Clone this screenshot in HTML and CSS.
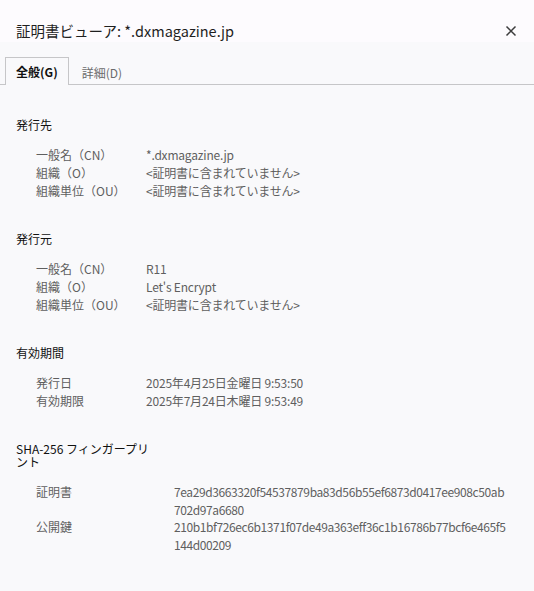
FILE: index.html
```html
<!DOCTYPE html>
<html lang="ja">
<head>
<meta charset="utf-8">
<title>証明書ビューア</title>
<link rel="stylesheet" href="styles.css">
</head>
<body>
<div class="dialog">
  <header class="titlebar">
    <h1 class="title">証明書ビューア: *.dxmagazine.jp</h1>
    <button class="close" aria-label="閉じる">
      <svg width="12" height="12" viewBox="0 0 12 12"><path d="M1.5 1.5 L10.5 10.5 M10.5 1.5 L1.5 10.5" stroke="#3c3c3c" stroke-width="1.5" fill="none"/></svg>
    </button>
  </header>
  <nav class="tabs">
    <div class="tab active">全般(G)</div>
    <div class="tab">詳細(D)</div>
  </nav>
  <main class="content">
    <section class="section">
      <h2 class="heading">発行先</h2>
      <div class="fields">
        <div class="label">一般名（CN）</div><div class="value">*.dxmagazine.jp</div>
        <div class="label">組織（O）</div><div class="value">&lt;証明書に含まれていません&gt;</div>
        <div class="label">組織単位（OU）</div><div class="value">&lt;証明書に含まれていません&gt;</div>
      </div>
    </section>
    <section class="section">
      <h2 class="heading">発行元</h2>
      <div class="fields">
        <div class="label">一般名（CN）</div><div class="value">R11</div>
        <div class="label">組織（O）</div><div class="value">Let's Encrypt</div>
        <div class="label">組織単位（OU）</div><div class="value">&lt;証明書に含まれていません&gt;</div>
      </div>
    </section>
    <section class="section">
      <h2 class="heading">有効期間</h2>
      <div class="fields">
        <div class="label">発行日</div><div class="value">2025年4月25日金曜日 9:53:50</div>
        <div class="label">有効期限</div><div class="value">2025年7月24日木曜日 9:53:49</div>
      </div>
    </section>
    <section class="section">
      <h2 class="heading wrap">SHA-256 フィンガープリ<br>ント</h2>
      <div class="fields fp">
        <div class="label">証明書</div><div class="value hash">7ea29d3663320f54537879ba83d56b55ef6873d0417ee908c50ab<br>702d97a6680</div>
        <div class="label">公開鍵</div><div class="value hash">210b1bf726ec6b1371f07de49a363eff36c1b16786b77bcf6e465f5<br>144d00209</div>
      </div>
    </section>
  </main>
</div>
</body>
</html>
```
FILE: styles.css
```css
* { box-sizing: border-box; }
html, body {
  margin: 0;
  padding: 0;
}
body {
  width: 534px;
  height: 591px;
  background: #f9f9fb;
  font-family: "Noto Sans CJK JP", "Noto Sans", sans-serif;
  color: #202124;
  overflow: hidden;
}
.dialog {
  display: flex;
  flex-direction: column;
  height: 591px;
}
.titlebar {
  height: 42px;
  background: #fdfbfe;
  display: flex;
  align-items: center;
  justify-content: space-between;
  padding: 20px 11px 0 16px;
}
.title {
  margin: 0;
  font-size: 14.5px;
  font-weight: 400;
  line-height: 20px;
  color: #1f1f1f;
}
.close {
  border: 0;
  background: transparent;
  width: 24px;
  height: 24px;
  padding: 0;
  display: flex;
  align-items: center;
  justify-content: center;
}
.tabs {
  display: flex;
  align-items: flex-end;
  height: 43px;
  padding: 0 0 0 5px;
  border-bottom: 1px solid #c6c6c8;
  background: #f9f9fb;
}
.tab {
  height: 27px;
  padding: 0 11px 0 12px;
  font-size: 12px;
  line-height: 28px;
  color: #6b6b6b;
  border: 1px solid transparent;
  border-bottom: 0;
  margin-bottom: -1px;
  white-space: nowrap;
}
.tab.active {
  color: #111;
  font-weight: 700;
  border-color: #c6c6c8;
  background: #f9f9fb;
  height: 28px;
  padding: 0 10px;
}
.content {
  padding: 31px 16px 0 16px;
  display: flex;
  flex-direction: column;
  gap: 30px;
}
.heading {
  margin: 0 0 12px 0;
  font-size: 12px;
  font-weight: 400;
  line-height: 18px;
  color: #111;
}
.heading.wrap {
  line-height: 13px;
  margin-bottom: 15px;
  padding-top: 2px;
}
.fields {
  display: grid;
  grid-template-columns: 110px 1fr;
  padding-left: 20px;
  font-size: 12px;
  line-height: 18px;
  color: #5f5f5f;
}
.fields.fp {
  grid-template-columns: 138px 1fr;
  line-height: 17.5px;
}
.label, .value {
  white-space: nowrap;
}
.value {
  letter-spacing: -0.2px;
}
.value.hash {
  letter-spacing: -0.4px;
}
```
